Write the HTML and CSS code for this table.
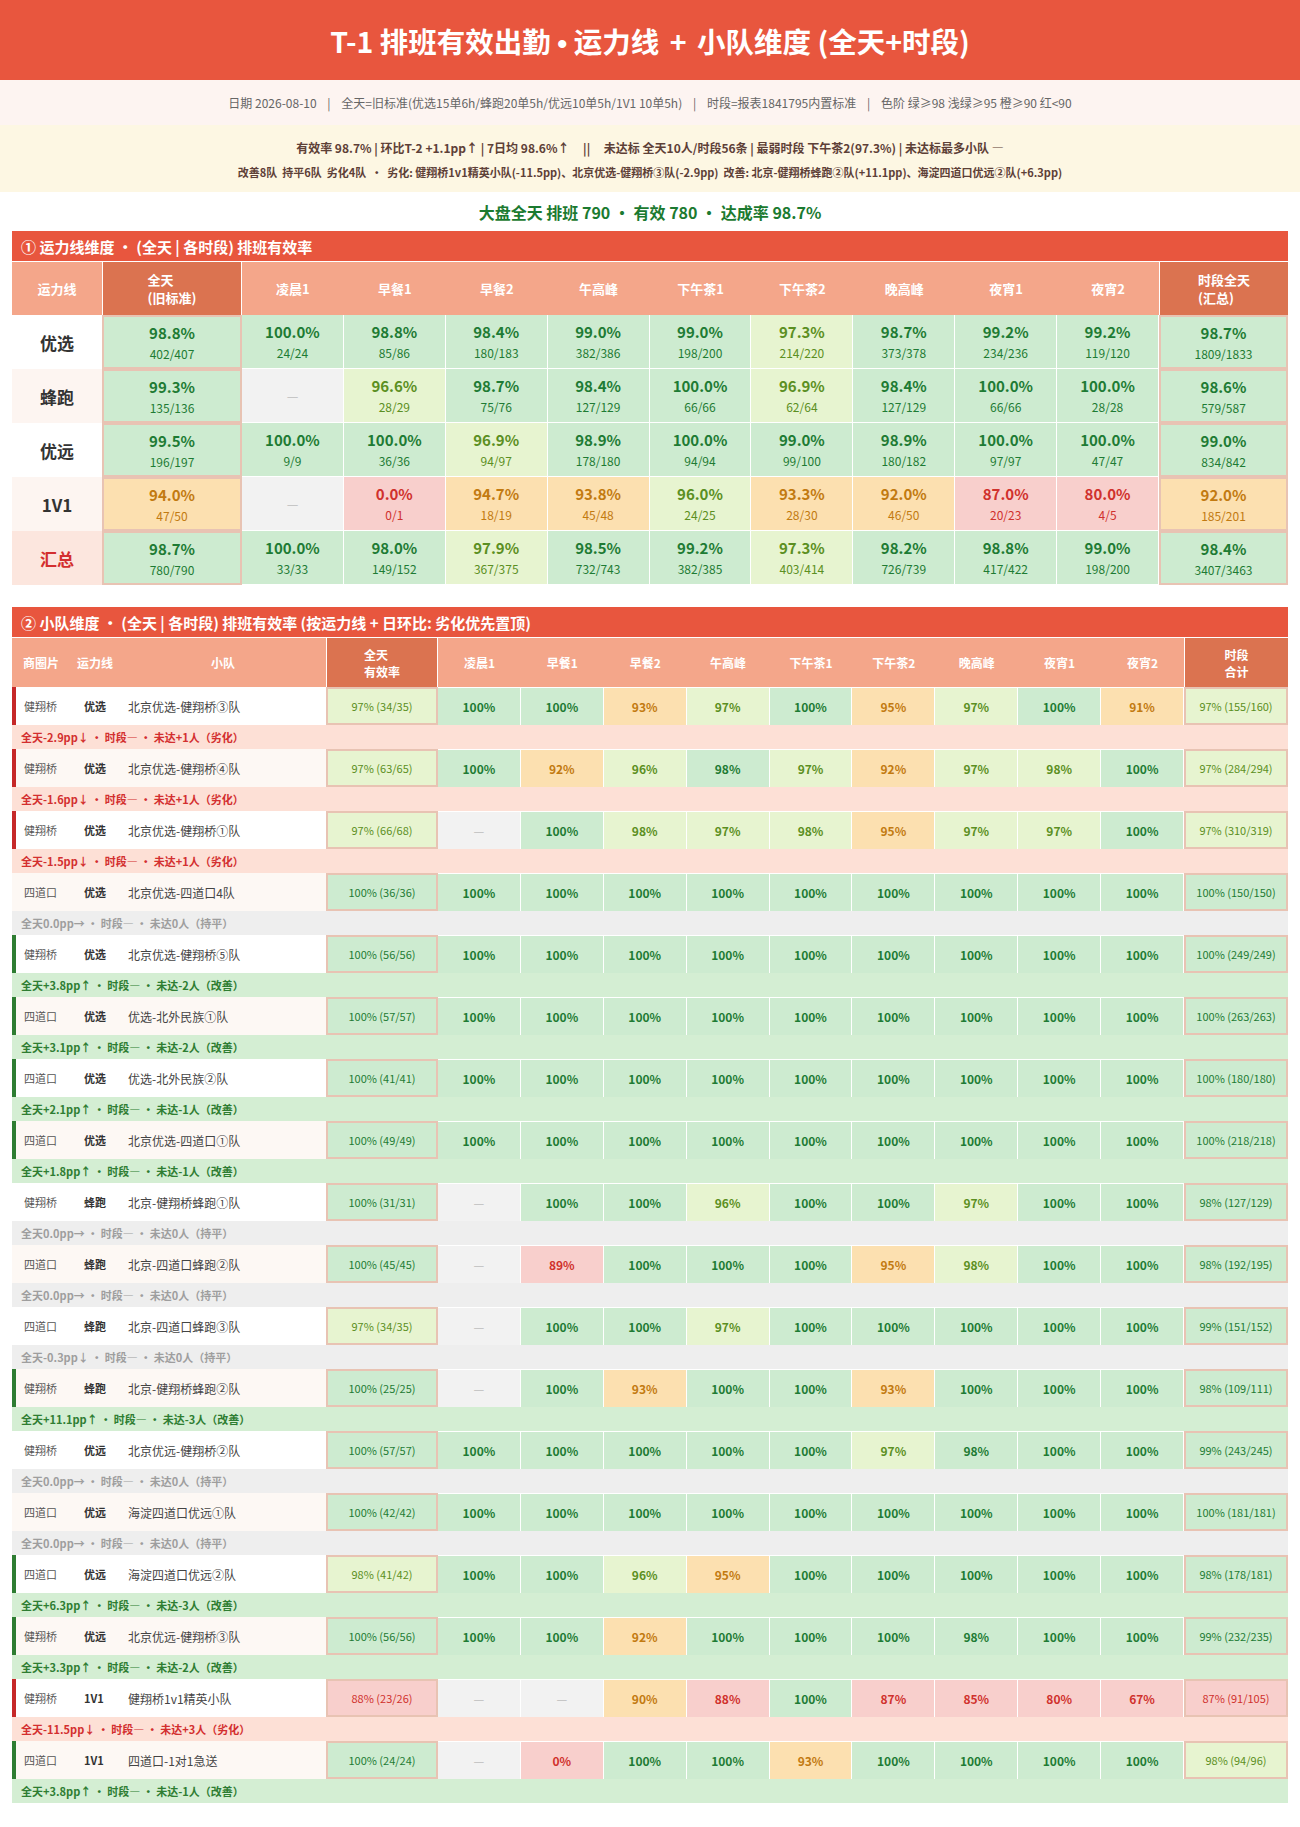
FILE: index.html
```html
<!DOCTYPE html>
<html lang="zh-CN">
<head>
<meta charset="utf-8">
<title>T-1 排班有效出勤</title>
<link rel="stylesheet" href="styles.css">
</head>
<body>
<header class="title"><span class="tt">T-1 排班有效出勤 <span class="nb">•</span> 运力线 <span class="op">+</span> 小队维度 (全天+时段)</span></header>
<div class="sub">日期 2026-08-10&nbsp;&nbsp;&nbsp;&nbsp;|&nbsp;&nbsp;&nbsp;&nbsp;全天=旧标准(优选15单6h/蜂跑20单5h/优远10单5h/1V1 10单5h)&nbsp;&nbsp;&nbsp;&nbsp;|&nbsp;&nbsp;&nbsp;&nbsp;时段=报表1841795内置标准&nbsp;&nbsp;&nbsp;&nbsp;|&nbsp;&nbsp;&nbsp;&nbsp;色阶 绿≥98 浅绿≥95 橙≥90 红&lt;90</div>
<div class="summary">
  <div class="l1">有效率 98.7% | 环比T-2 +1.1pp↑ | 7日均 98.6%↑&nbsp;&nbsp;&nbsp;&nbsp;&nbsp;||&nbsp;&nbsp;&nbsp;&nbsp;&nbsp;未达标 全天10人/时段56条 | 最弱时段 下午茶2(97.3%) | 未达标最多小队 —</div>
  <div class="l2">改善8队 &nbsp;持平6队 &nbsp;劣化4队 &nbsp;• &nbsp;劣化: 健翔桥1v1精英小队(-11.5pp)、北京优选-健翔桥③队(-2.9pp) &nbsp;改善: 北京-健翔桥蜂跑②队(+11.1pp)、海淀四道口优远②队(+6.3pp)</div>
</div>
<div class="big">大盘全天 排班 790 • 有效 780 • 达成率 98.7%</div>

<section class="sec">
  <div class="sec-bar">① 运力线维度 • (全天 | 各时段) 排班有效率</div>
  <div class="lrow lhead">
    <div class="hc">运力线</div>
    <div class="hc dark">全天<br>(旧标准)</div>
    <div class="hc">凌晨1</div>
    <div class="hc">早餐1</div>
    <div class="hc">早餐2</div>
    <div class="hc">午高峰</div>
    <div class="hc">下午茶1</div>
    <div class="hc">下午茶2</div>
    <div class="hc">晚高峰</div>
    <div class="hc">夜宵1</div>
    <div class="hc">夜宵2</div>
    <div class="hc dark">时段全天<br>(汇总)</div>
  </div>

  <div class="lrow">
    <div class="lbl">优选</div>
    <div class="c g fr"><b>98.8%</b><span>402/407</span></div>
    <div class="c g"><b>100.0%</b><span>24/24</span></div>
    <div class="c g"><b>98.8%</b><span>85/86</span></div>
    <div class="c g"><b>98.4%</b><span>180/183</span></div>
    <div class="c g"><b>99.0%</b><span>382/386</span></div>
    <div class="c g"><b>99.0%</b><span>198/200</span></div>
    <div class="c lg"><b>97.3%</b><span>214/220</span></div>
    <div class="c g"><b>98.7%</b><span>373/378</span></div>
    <div class="c g"><b>99.2%</b><span>234/236</span></div>
    <div class="c g"><b>99.2%</b><span>119/120</span></div>
    <div class="c g fr"><b>98.7%</b><span>1809/1833</span></div>
  </div>
  <div class="lrow alt">
    <div class="lbl">蜂跑</div>
    <div class="c g fr"><b>99.3%</b><span>135/136</span></div>
    <div class="c na"><i>—</i></div>
    <div class="c lg"><b>96.6%</b><span>28/29</span></div>
    <div class="c g"><b>98.7%</b><span>75/76</span></div>
    <div class="c g"><b>98.4%</b><span>127/129</span></div>
    <div class="c g"><b>100.0%</b><span>66/66</span></div>
    <div class="c lg"><b>96.9%</b><span>62/64</span></div>
    <div class="c g"><b>98.4%</b><span>127/129</span></div>
    <div class="c g"><b>100.0%</b><span>66/66</span></div>
    <div class="c g"><b>100.0%</b><span>28/28</span></div>
    <div class="c g fr"><b>98.6%</b><span>579/587</span></div>
  </div>
  <div class="lrow">
    <div class="lbl">优远</div>
    <div class="c g fr"><b>99.5%</b><span>196/197</span></div>
    <div class="c g"><b>100.0%</b><span>9/9</span></div>
    <div class="c g"><b>100.0%</b><span>36/36</span></div>
    <div class="c lg"><b>96.9%</b><span>94/97</span></div>
    <div class="c g"><b>98.9%</b><span>178/180</span></div>
    <div class="c g"><b>100.0%</b><span>94/94</span></div>
    <div class="c g"><b>99.0%</b><span>99/100</span></div>
    <div class="c g"><b>98.9%</b><span>180/182</span></div>
    <div class="c g"><b>100.0%</b><span>97/97</span></div>
    <div class="c g"><b>100.0%</b><span>47/47</span></div>
    <div class="c g fr"><b>99.0%</b><span>834/842</span></div>
  </div>
  <div class="lrow alt">
    <div class="lbl">1V1</div>
    <div class="c o fr"><b>94.0%</b><span>47/50</span></div>
    <div class="c na"><i>—</i></div>
    <div class="c r"><b>0.0%</b><span>0/1</span></div>
    <div class="c o"><b>94.7%</b><span>18/19</span></div>
    <div class="c o"><b>93.8%</b><span>45/48</span></div>
    <div class="c lg"><b>96.0%</b><span>24/25</span></div>
    <div class="c o"><b>93.3%</b><span>28/30</span></div>
    <div class="c o"><b>92.0%</b><span>46/50</span></div>
    <div class="c r"><b>87.0%</b><span>20/23</span></div>
    <div class="c r"><b>80.0%</b><span>4/5</span></div>
    <div class="c o fr"><b>92.0%</b><span>185/201</span></div>
  </div>
  <div class="lrow">
    <div class="lbl sum">汇总</div>
    <div class="c g fr"><b>98.7%</b><span>780/790</span></div>
    <div class="c g"><b>100.0%</b><span>33/33</span></div>
    <div class="c g"><b>98.0%</b><span>149/152</span></div>
    <div class="c lg"><b>97.9%</b><span>367/375</span></div>
    <div class="c g"><b>98.5%</b><span>732/743</span></div>
    <div class="c g"><b>99.2%</b><span>382/385</span></div>
    <div class="c lg"><b>97.3%</b><span>403/414</span></div>
    <div class="c g"><b>98.2%</b><span>726/739</span></div>
    <div class="c g"><b>98.8%</b><span>417/422</span></div>
    <div class="c g"><b>99.0%</b><span>198/200</span></div>
    <div class="c g fr"><b>98.4%</b><span>3407/3463</span></div>
  </div>
</section>

<section class="sec sec2">
  <div class="sec-bar">② 小队维度 • (全天 | 各时段) 排班有效率 (按运力线 + 日环比: 劣化优先置顶)</div>
  <div class="thead">
    <div class="th left">商圈片</div>
    <div class="th left2">运力线</div>
    <div class="th">小队</div>
    <div class="th dark">全天<br>有效率</div>
    <div class="th">凌晨1</div>
    <div class="th">早餐1</div>
    <div class="th">早餐2</div>
    <div class="th">午高峰</div>
    <div class="th">下午茶1</div>
    <div class="th">下午茶2</div>
    <div class="th">晚高峰</div>
    <div class="th">夜宵1</div>
    <div class="th">夜宵2</div>
    <div class="th dark">时段<br>合计</div>
  </div>

  <div class="team bad">
    <div class="trow">
      <div class="area">健翔桥</div><div class="line">优选</div><div class="name">北京优选-健翔桥③队</div>
      <div class="tc lg fr">97% (34/35)</div>
      <div class="tc g">100%</div><div class="tc g">100%</div><div class="tc o">93%</div><div class="tc lg">97%</div><div class="tc g">100%</div><div class="tc o">95%</div><div class="tc lg">97%</div><div class="tc g">100%</div><div class="tc o">91%</div>
      <div class="tc lg fr">97% (155/160)</div>
    </div>
    <div class="detail">全天-2.9pp↓ • 时段— • 未达+1人（劣化）</div>
  </div>

  <div class="team bad alt">
    <div class="trow">
      <div class="area">健翔桥</div><div class="line">优选</div><div class="name">北京优选-健翔桥④队</div>
      <div class="tc lg fr">97% (63/65)</div>
      <div class="tc g">100%</div><div class="tc o">92%</div><div class="tc lg">96%</div><div class="tc g">98%</div><div class="tc lg">97%</div><div class="tc o">92%</div><div class="tc lg">97%</div><div class="tc lg">98%</div><div class="tc g">100%</div>
      <div class="tc lg fr">97% (284/294)</div>
    </div>
    <div class="detail">全天-1.6pp↓ • 时段— • 未达+1人（劣化）</div>
  </div>

  <div class="team bad">
    <div class="trow">
      <div class="area">健翔桥</div><div class="line">优选</div><div class="name">北京优选-健翔桥①队</div>
      <div class="tc lg fr">97% (66/68)</div>
      <div class="tc na">—</div><div class="tc g">100%</div><div class="tc lg">98%</div><div class="tc lg">97%</div><div class="tc lg">98%</div><div class="tc o">95%</div><div class="tc lg">97%</div><div class="tc lg">97%</div><div class="tc g">100%</div>
      <div class="tc lg fr">97% (310/319)</div>
    </div>
    <div class="detail">全天-1.5pp↓ • 时段— • 未达+1人（劣化）</div>
  </div>

  <div class="team flat alt">
    <div class="trow">
      <div class="area">四道口</div><div class="line">优选</div><div class="name">北京优选-四道口4队</div>
      <div class="tc g fr">100% (36/36)</div>
      <div class="tc g">100%</div><div class="tc g">100%</div><div class="tc g">100%</div><div class="tc g">100%</div><div class="tc g">100%</div><div class="tc g">100%</div><div class="tc g">100%</div><div class="tc g">100%</div><div class="tc g">100%</div>
      <div class="tc g fr">100% (150/150)</div>
    </div>
    <div class="detail">全天0.0pp→ • 时段— • 未达0人（持平）</div>
  </div>

  <div class="team good">
    <div class="trow">
      <div class="area">健翔桥</div><div class="line">优选</div><div class="name">北京优选-健翔桥⑤队</div>
      <div class="tc g fr">100% (56/56)</div>
      <div class="tc g">100%</div><div class="tc g">100%</div><div class="tc g">100%</div><div class="tc g">100%</div><div class="tc g">100%</div><div class="tc g">100%</div><div class="tc g">100%</div><div class="tc g">100%</div><div class="tc g">100%</div>
      <div class="tc g fr">100% (249/249)</div>
    </div>
    <div class="detail">全天+3.8pp↑ • 时段— • 未达-2人（改善）</div>
  </div>

  <div class="team good alt">
    <div class="trow">
      <div class="area">四道口</div><div class="line">优选</div><div class="name">优选-北外民族①队</div>
      <div class="tc g fr">100% (57/57)</div>
      <div class="tc g">100%</div><div class="tc g">100%</div><div class="tc g">100%</div><div class="tc g">100%</div><div class="tc g">100%</div><div class="tc g">100%</div><div class="tc g">100%</div><div class="tc g">100%</div><div class="tc g">100%</div>
      <div class="tc g fr">100% (263/263)</div>
    </div>
    <div class="detail">全天+3.1pp↑ • 时段— • 未达-2人（改善）</div>
  </div>

  <div class="team good">
    <div class="trow">
      <div class="area">四道口</div><div class="line">优选</div><div class="name">优选-北外民族②队</div>
      <div class="tc g fr">100% (41/41)</div>
      <div class="tc g">100%</div><div class="tc g">100%</div><div class="tc g">100%</div><div class="tc g">100%</div><div class="tc g">100%</div><div class="tc g">100%</div><div class="tc g">100%</div><div class="tc g">100%</div><div class="tc g">100%</div>
      <div class="tc g fr">100% (180/180)</div>
    </div>
    <div class="detail">全天+2.1pp↑ • 时段— • 未达-1人（改善）</div>
  </div>

  <div class="team good alt">
    <div class="trow">
      <div class="area">四道口</div><div class="line">优选</div><div class="name">北京优选-四道口①队</div>
      <div class="tc g fr">100% (49/49)</div>
      <div class="tc g">100%</div><div class="tc g">100%</div><div class="tc g">100%</div><div class="tc g">100%</div><div class="tc g">100%</div><div class="tc g">100%</div><div class="tc g">100%</div><div class="tc g">100%</div><div class="tc g">100%</div>
      <div class="tc g fr">100% (218/218)</div>
    </div>
    <div class="detail">全天+1.8pp↑ • 时段— • 未达-1人（改善）</div>
  </div>

  <div class="team flat">
    <div class="trow">
      <div class="area">健翔桥</div><div class="line">蜂跑</div><div class="name">北京-健翔桥蜂跑①队</div>
      <div class="tc g fr">100% (31/31)</div>
      <div class="tc na">—</div><div class="tc g">100%</div><div class="tc g">100%</div><div class="tc lg">96%</div><div class="tc g">100%</div><div class="tc g">100%</div><div class="tc lg">97%</div><div class="tc g">100%</div><div class="tc g">100%</div>
      <div class="tc g fr">98% (127/129)</div>
    </div>
    <div class="detail">全天0.0pp→ • 时段— • 未达0人（持平）</div>
  </div>

  <div class="team flat alt">
    <div class="trow">
      <div class="area">四道口</div><div class="line">蜂跑</div><div class="name">北京-四道口蜂跑②队</div>
      <div class="tc g fr">100% (45/45)</div>
      <div class="tc na">—</div><div class="tc r">89%</div><div class="tc g">100%</div><div class="tc g">100%</div><div class="tc g">100%</div><div class="tc o">95%</div><div class="tc lg">98%</div><div class="tc g">100%</div><div class="tc g">100%</div>
      <div class="tc g fr">98% (192/195)</div>
    </div>
    <div class="detail">全天0.0pp→ • 时段— • 未达0人（持平）</div>
  </div>

  <div class="team flat">
    <div class="trow">
      <div class="area">四道口</div><div class="line">蜂跑</div><div class="name">北京-四道口蜂跑③队</div>
      <div class="tc lg fr">97% (34/35)</div>
      <div class="tc na">—</div><div class="tc g">100%</div><div class="tc g">100%</div><div class="tc lg">97%</div><div class="tc g">100%</div><div class="tc g">100%</div><div class="tc g">100%</div><div class="tc g">100%</div><div class="tc g">100%</div>
      <div class="tc g fr">99% (151/152)</div>
    </div>
    <div class="detail">全天-0.3pp↓ • 时段— • 未达0人（持平）</div>
  </div>

  <div class="team good alt">
    <div class="trow">
      <div class="area">健翔桥</div><div class="line">蜂跑</div><div class="name">北京-健翔桥蜂跑②队</div>
      <div class="tc g fr">100% (25/25)</div>
      <div class="tc na">—</div><div class="tc g">100%</div><div class="tc o">93%</div><div class="tc g">100%</div><div class="tc g">100%</div><div class="tc o">93%</div><div class="tc g">100%</div><div class="tc g">100%</div><div class="tc g">100%</div>
      <div class="tc g fr">98% (109/111)</div>
    </div>
    <div class="detail">全天+11.1pp↑ • 时段— • 未达-3人（改善）</div>
  </div>

  <div class="team flat">
    <div class="trow">
      <div class="area">健翔桥</div><div class="line">优远</div><div class="name">北京优远-健翔桥②队</div>
      <div class="tc g fr">100% (57/57)</div>
      <div class="tc g">100%</div><div class="tc g">100%</div><div class="tc g">100%</div><div class="tc g">100%</div><div class="tc g">100%</div><div class="tc lg">97%</div><div class="tc g">98%</div><div class="tc g">100%</div><div class="tc g">100%</div>
      <div class="tc g fr">99% (243/245)</div>
    </div>
    <div class="detail">全天0.0pp→ • 时段— • 未达0人（持平）</div>
  </div>

  <div class="team flat alt">
    <div class="trow">
      <div class="area">四道口</div><div class="line">优远</div><div class="name">海淀四道口优远①队</div>
      <div class="tc g fr">100% (42/42)</div>
      <div class="tc g">100%</div><div class="tc g">100%</div><div class="tc g">100%</div><div class="tc g">100%</div><div class="tc g">100%</div><div class="tc g">100%</div><div class="tc g">100%</div><div class="tc g">100%</div><div class="tc g">100%</div>
      <div class="tc g fr">100% (181/181)</div>
    </div>
    <div class="detail">全天0.0pp→ • 时段— • 未达0人（持平）</div>
  </div>

  <div class="team good">
    <div class="trow">
      <div class="area">四道口</div><div class="line">优远</div><div class="name">海淀四道口优远②队</div>
      <div class="tc lg fr">98% (41/42)</div>
      <div class="tc g">100%</div><div class="tc g">100%</div><div class="tc lg">96%</div><div class="tc o">95%</div><div class="tc g">100%</div><div class="tc g">100%</div><div class="tc g">100%</div><div class="tc g">100%</div><div class="tc g">100%</div>
      <div class="tc g fr">98% (178/181)</div>
    </div>
    <div class="detail">全天+6.3pp↑ • 时段— • 未达-3人（改善）</div>
  </div>

  <div class="team good alt">
    <div class="trow">
      <div class="area">健翔桥</div><div class="line">优远</div><div class="name">北京优远-健翔桥③队</div>
      <div class="tc g fr">100% (56/56)</div>
      <div class="tc g">100%</div><div class="tc g">100%</div><div class="tc o">92%</div><div class="tc g">100%</div><div class="tc g">100%</div><div class="tc g">100%</div><div class="tc g">98%</div><div class="tc g">100%</div><div class="tc g">100%</div>
      <div class="tc g fr">99% (232/235)</div>
    </div>
    <div class="detail">全天+3.3pp↑ • 时段— • 未达-2人（改善）</div>
  </div>

  <div class="team bad">
    <div class="trow">
      <div class="area">健翔桥</div><div class="line">1V1</div><div class="name">健翔桥1v1精英小队</div>
      <div class="tc r fr">88% (23/26)</div>
      <div class="tc na">—</div><div class="tc na">—</div><div class="tc o">90%</div><div class="tc r">88%</div><div class="tc g">100%</div><div class="tc r">87%</div><div class="tc r">85%</div><div class="tc r">80%</div><div class="tc r">67%</div>
      <div class="tc r fr">87% (91/105)</div>
    </div>
    <div class="detail">全天-11.5pp↓ • 时段— • 未达+3人（劣化）</div>
  </div>

  <div class="team good alt">
    <div class="trow">
      <div class="area">四道口</div><div class="line">1V1</div><div class="name">四道口-1对1急送</div>
      <div class="tc g fr">100% (24/24)</div>
      <div class="tc na">—</div><div class="tc r">0%</div><div class="tc g">100%</div><div class="tc g">100%</div><div class="tc o">93%</div><div class="tc g">100%</div><div class="tc g">100%</div><div class="tc g">100%</div><div class="tc g">100%</div>
      <div class="tc lg fr">98% (94/96)</div>
    </div>
    <div class="detail">全天+3.8pp↑ • 时段— • 未达-1人（改善）</div>
  </div>
</section>
</body>
</html>
```

FILE: styles.css
```css
* { box-sizing: border-box; }

body {
  margin: 0;
  padding-bottom: 24px;
  background: #fff;
  color: #333;
  font-family: "Noto Sans CJK SC", "Noto Sans", "Liberation Sans", sans-serif;
}

.title {
  height: 80px;
  display: flex;
  align-items: center;
  justify-content: center;
  background: #e8563e;
  color: #fff;
  font-size: 28.5px;
  font-weight: 700;
}
.title .nb { font-family: "Liberation Sans", sans-serif; }
.title .op { margin: 0 4px; }

.sub {
  height: 45px;
  display: flex;
  align-items: center;
  justify-content: center;
  background: #fdf4f1;
  color: #666;
  font-size: 12px;
}

.summary {
  height: 67px;
  padding-top: 2px;
  display: flex;
  flex-direction: column;
  align-items: center;
  justify-content: center;
  background: #fdf7e3;
  color: #5d4037;
  font-weight: 700;
}
.summary .l1 { font-size: 12px; line-height: 24px; }
.summary .l2 { font-size: 11px; line-height: 24px; }

.big {
  height: 39px;
  display: flex;
  align-items: center;
  justify-content: center;
  color: #1b7a30;
  font-size: 16px;
  font-weight: 700;
}

.sec { margin: 0 12px; }
.sec2 { margin-top: 22px; }

.sec-bar {
  height: 31px;
  padding-left: 9px;
  display: flex;
  align-items: center;
  background: #e8563e;
  border-bottom: 1px solid #fff;
  color: #fff;
  font-size: 15px;
  font-weight: 700;
}

/* ---------- section 1 ---------- */
.lrow {
  display: grid;
  grid-template-columns: 90px 140px repeat(9, 1fr) 129px;
  height: 54px;
}
.lhead { height: 53px; background: #f4a68a; }

.hc {
  display: flex;
  align-items: center;
  justify-content: center;
  color: #fff;
  font-size: 13px;
  font-weight: 700;
  line-height: 18px;
}
.hc.dark, .th.dark {
  background: #db7350;
  border-left: 1px solid #fff;
  border-right: 1px solid #fff;
}
.hc.dark:last-child, .th.dark:last-child { border-right: 0; }

.lbl {
  display: flex;
  align-items: center;
  justify-content: center;
  background: #fff;
  color: #333;
  font-size: 17px;
  font-weight: 700;
}
.lrow.alt .lbl { background: #fdf5f1; }
.lbl.sum { background: #fce6de; color: #d32f2f; }

.c {
  display: flex;
  flex-direction: column;
  align-items: center;
  justify-content: center;
  border-right: 1px solid #fff;
  border-bottom: 1px solid #fff;
}
.c b { font-size: 15px; line-height: 20px; font-weight: 700; }
.c span { margin-top: 3px; font-size: 12px; line-height: 16px; }
.c i { font-style: normal; color: #bdbdbd; font-size: 13px; }
.c.fr, .tc.fr { border: 2px solid #e8c3b3; }

/* colour scale */
.g  { background: #cdebd0; color: #1e7b34; }
.lg { background: #e7f4d0; color: #5b8f22; }
.o  { background: #fce0b0; color: #c27a10; }
.r  { background: #f8cfcc; color: #d0312d; }
.na { background: #f2f2f2; color: #bdbdbd; }

/* ---------- section 2 ---------- */
.thead {
  display: grid;
  grid-template-columns: 60px 48px 206px 112px repeat(9, 1fr) 104px;
  height: 49px;
  background: #f4a68a;
}
.th {
  display: flex;
  align-items: center;
  justify-content: center;
  color: #fff;
  font-size: 12px;
  font-weight: 700;
  line-height: 17px;
}
.th.left { justify-content: flex-start; padding-left: 11px; }
.th.left2 { justify-content: flex-start; padding-left: 5px; }

.trow {
  display: grid;
  grid-template-columns: 64px 44px 206px 112px repeat(9, 1fr) 104px;
  height: 38px;
  background: #fff;
}
.team.alt .trow { background: #fdf8f4; }

.area, .line, .name {
  display: flex;
  align-items: center;
  padding-left: 8px;
  white-space: nowrap;
}
.area {
  border-left: 4px solid transparent;
  color: #555;
  font-size: 11px;
}
.team.bad .area { border-left-color: #c62828; }
.team.good .area { border-left-color: #2e7d32; }
.line { color: #333; font-size: 11px; font-weight: 700; }
.name { color: #444; font-size: 12px; }

.tc {
  display: flex;
  align-items: center;
  justify-content: center;
  border-top: 1px solid #fff;
  border-right: 1px solid #fff;
  font-size: 12px;
  font-weight: 700;
}
.tc.fr { font-size: 11px; font-weight: 400; }
.tc.na { font-weight: 400; }

.detail {
  height: 24px;
  padding-left: 9px;
  display: flex;
  align-items: center;
  font-size: 11px;
  font-weight: 700;
}
.team.bad .detail  { background: #fde0d6; color: #d32f2f; }
.team.good .detail { background: #d4eed3; color: #2e7d32; }
.team.flat .detail { background: #eeeeee; color: #9e9e9e; }
```
